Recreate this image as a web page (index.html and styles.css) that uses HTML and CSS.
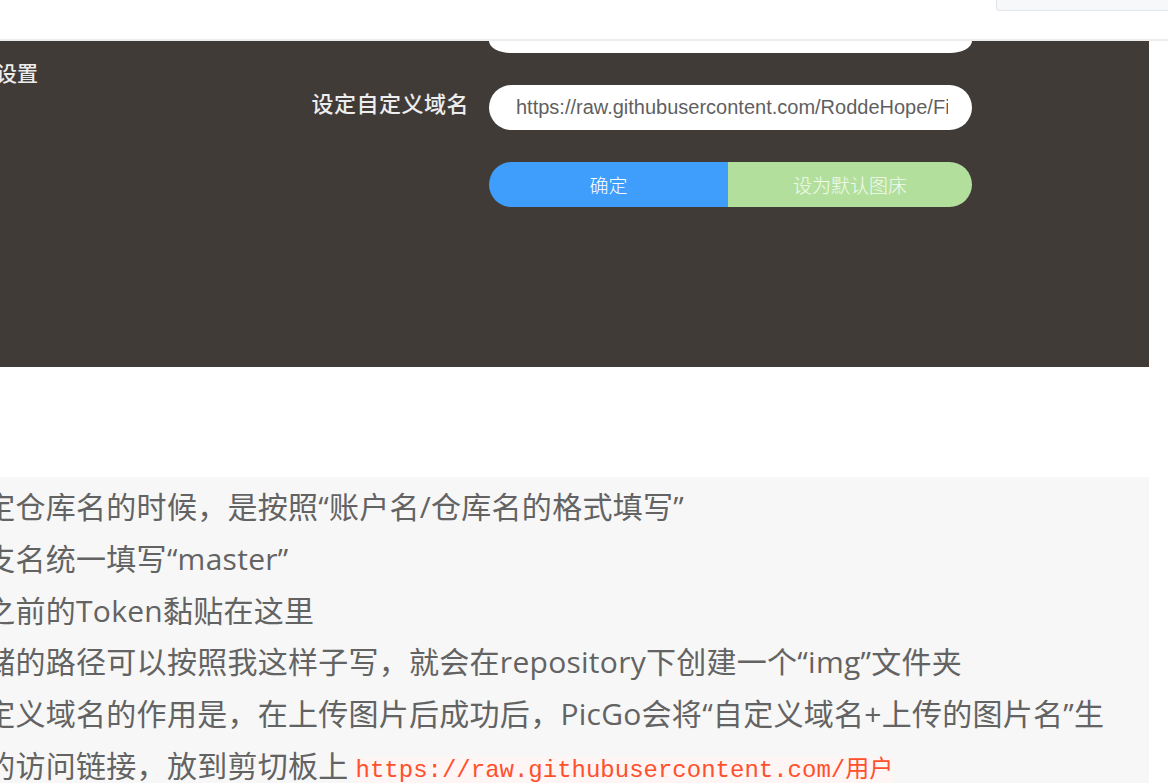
FILE: index.html
```html
<!DOCTYPE html>
<html lang="zh-CN">
<head>
<meta charset="utf-8">
<title>PicGo 设置</title>
<link rel="stylesheet" href="styles.css">
</head>
<body>
<header class="topbar">
  <div class="toolbox"></div>
</header>
<section class="shot">
  <div class="side">设置</div>
  <div class="form">
    <div class="label"></div>
    <div class="field-tail"></div>
    <div class="label label-domain">设定自定义域名</div>
    <div class="field"><span class="field-text">https://raw.githubusercontent.com/RoddeHope/FigureBed/master/img/</span></div>
    <div class="label"></div>
    <div class="btns">
      <div class="btn btn-ok">确定</div>
      <div class="btn btn-default">设为默认图床</div>
    </div>
  </div>
</section>
<div class="spacer"></div>
<blockquote class="quote">
  <ul class="notes">
    <li>设定仓库名的时候，是按照“账户名/仓库名的格式填写”</li>
    <li>分支名统一填写“master”</li>
    <li>将之前的Token黏贴在这里</li>
    <li>存储的路径可以按照我这样子写，就会在repository下创建一个“img”文件夹</li>
    <li>自定义域名的作用是，在上传图片后成功后，PicGo会将“自定义域名+上传的图片名”生成的访问链接，放到剪切板上<code class="code">https://raw.githubusercontent.com/用户名/RepositoryName/分支名</code></li>
  </ul>
</blockquote>
</body>
</html>
```
FILE: styles.css
```css
html, body {
  margin: 0;
  padding: 0;
  background: #ffffff;
  overflow: hidden;
}
body {
  width: 1168px;
  height: 783px;
  font-family: "Open Sans", "Noto Sans CJK SC", sans-serif;
}
.topbar {
  height: 39px;
  border-bottom: 2px solid #ececec;
  display: flex;
  justify-content: flex-end;
  align-items: flex-start;
}
.toolbox {
  width: 171px;
  height: 10px;
  background: #f6f8fa;
  border: 1px solid #e1e4e8;
  border-top: none;
  border-right: none;
  border-bottom-left-radius: 4px;
}
.shot {
  width: 1149px;
  height: 326px;
  background: #413b38;
  display: flex;
  overflow: hidden;
  font-family: "Noto Sans CJK SC", sans-serif;
}
.side {
  width: 268px;
  margin-left: -4px;
  padding-top: 17px;
  font-size: 21px;
  line-height: 28px;
  color: #ececec;
  font-weight: 500;
}
.form {
  display: grid;
  grid-template-columns: 200px 483px;
  column-gap: 21px;
  align-content: start;
  margin-left: 4px;
}
.label {
  text-align: right;
  color: #ededed;
  font-size: 22px;
  font-weight: 500;
}
.label-domain {
  margin-top: 32px;
  padding-top: 2px;
  line-height: 30px;
  letter-spacing: 0.5px;
  margin-right: -1px;
}
.field-tail {
  height: 12px;
  background: #ffffff;
  border-radius: 0 0 22px 22px / 0 0 12px 12px;
}
.field {
  margin-top: 32px;
  height: 45px;
  background: #ffffff;
  border-radius: 23px;
  padding: 0 24px 0 27px;
  display: flex;
  align-items: center;
  overflow: hidden;
  white-space: nowrap;
}
.field-text {
  display: block;
  overflow: hidden;
  font-family: "Liberation Sans", Arial, sans-serif;
  font-size: 20px;
  color: #5f5f62;
}
.btns {
  grid-column: 2;
  margin-top: 32px;
  height: 45px;
  display: flex;
  border-radius: 23px;
  overflow: hidden;
}
.btn {
  display: flex;
  align-items: center;
  justify-content: center;
  font-size: 19px;
  font-weight: 300;
  color: #ffffff;
}
.btn-ok {
  width: 239px;
  background: #3f9dfc;
}
.btn-default {
  flex: 1;
  background: #b2e09c;
  color: #f4faf0;
}
.spacer {
  height: 110px;
}
.quote {
  margin: 0;
  width: 1149px;
  height: 306px;
  background: #f7f7f7;
  overflow: hidden;
}
.notes {
  list-style: none;
  margin: 0 0 0 -45px;
  padding: 4px 35px 0 0;
  font-size: 30px;
  line-height: 51.8px;
  letter-spacing: 0.27px;
  color: #636363;
}
.code {
  font-family: "Liberation Mono", "Noto Sans CJK SC", monospace;
  font-size: 24px;
  letter-spacing: 0;
  color: #ff502c;
  background: #fff5f5;
  margin-left: 4px;
  padding: 0 3px;
}
```
